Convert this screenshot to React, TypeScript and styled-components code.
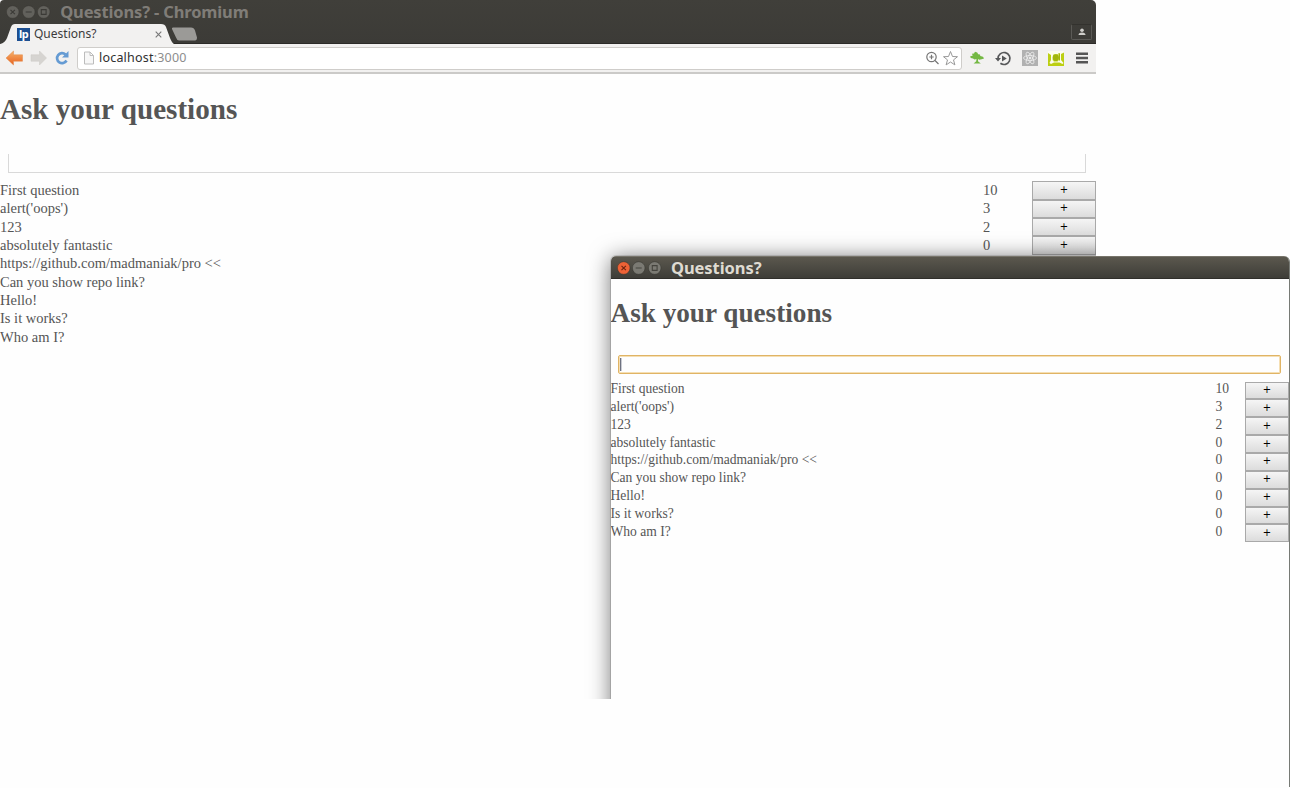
import React from "react";
import styled, { createGlobalStyle, css } from "styled-components";

const GlobalStyle = createGlobalStyle`
  *, *::before, *::after { box-sizing: border-box; }
  html, body { margin: 0; background: #fff; overflow: hidden; }
`;

const uiFont = `"Noto Sans", "Open Sans", sans-serif`;

const Desktop = styled.main`
  position: relative;
  width: 1290px;
  height: 788px;
  overflow: hidden;
  background: #fefefe;
`;

const BrowserWindow = styled.section`
  position: absolute;
  left: 0;
  top: 0;
  width: 1096px;
  height: 699px;
  overflow: hidden;
  display: flex;
  flex-direction: column;
  background: #fefefe;
  border-radius: 4px 5px 0 0;
`;

const AppWindow = styled.section`
  position: absolute;
  left: 610.5px;
  top: 256px;
  width: 679.5px;
  height: 531px;
  display: flex;
  flex-direction: column;
  background: #fefefe;
  border-right: 1px solid #777a75;
  border-radius: 5px 6px 0 0;
  overflow: hidden;
`;

const WindowShadow = styled.div`
  position: absolute;
  left: 611px;
  top: 256px;
  width: 679px;
  height: 560px;
  border-radius: 5px 5px 0 0;
  box-shadow: 0 0 0 1px rgba(0, 0, 0, 0.12), 0 2px 22px rgba(0, 0, 0, 0.55);
`;

const Chrome = styled.header`
  height: 44px;
  flex: none;
  display: flex;
  flex-direction: column;
  background: linear-gradient(#403f3a, #3c3b37);
  border-bottom: 1px solid #2c2b28;
`;

const TitleBar = styled.div<{ $active?: boolean }>`
  flex: none;
  display: flex;
  align-items: center;
  height: 24px;
  padding: 0 0 0 6px;
  ${(p) =>
    p.$active &&
    css`
      height: 23px;
      padding-top: 1px;
      background: linear-gradient(#5b584e, #3e3d38);
      border-top: 1px solid #77746a;
      border-bottom: 1px solid #302f2b;
    `}
`;

const Controls = styled.div<{ $gap: number }>`
  display: flex;
  gap: ${(p) => p.$gap}px;
`;

const Title = styled.h2<{ $active?: boolean }>`
  margin: 0 0 0 9px;
  font: 700 16.5px/20px ${uiFont};
  letter-spacing: ${(p) => (p.$active ? "-0.05px" : "-0.15px")};
  color: ${(p) => (p.$active ? "#dfdbd2" : "#807d78")};
  white-space: nowrap;
`;

const TabStrip = styled.div`
  display: flex;
  height: 20px;
  justify-content: space-between;
`;

const Tabs = styled.div`
  display: flex;
`;

const Tab = styled.div`
  position: relative;
  display: flex;
  align-items: center;
  width: 174px;
  height: 20px;
  padding-left: 17px;
`;

const TabShape = styled.svg`
  position: absolute;
  inset: 0;
`;

const Favicon = styled.span`
  position: relative;
  width: 13px;
  height: 13px;
  background: #1d4f91;
  color: #fff;
  font: 700 11px/12px ${uiFont};
  text-align: center;
  letter-spacing: -0.5px;
`;

const TabTitle = styled.span`
  position: relative;
  flex: 1;
  margin-left: 4px;
  font: 12px/16px ${uiFont};
  color: #3b3b3b;
`;

const TabClose = styled.svg`
  position: relative;
  margin-right: 12px;
`;

const UserBadge = styled.div`
  display: flex;
  align-items: center;
  justify-content: center;
  width: 21px;
  height: 16px;
  margin-right: 4px;
  border: 1px solid #5b5a56;
  border-top-color: #33322e;
  border-radius: 2px;
`;

const Toolbar = styled.nav`
  flex: none;
  display: flex;
  align-items: center;
  height: 30px;
  padding-left: 6px;
  background: #f2f1f0;
  border-bottom: 2px solid #cbcac8;
`;

const NavIcons = styled.div`
  display: flex;
  gap: 6px;
  width: 71px;
`;

const AddressBar = styled.div`
  display: flex;
  align-items: center;
  width: 885px;
  height: 23px;
  padding: 0 3px 0 5px;
  background: #fff;
  border: 1px solid #cfcdca;
  border-radius: 3px;
`;

const Address = styled.span`
  flex: 1;
  margin-left: 4px;
  font: 12.5px/18px ${uiFont};
  letter-spacing: 0.2px;
  color: #2f2f2f;
`;

const Port = styled.span`
  color: #8d8d8d;
`;

const Extensions = styled.div`
  display: flex;
  align-items: center;
  gap: 10px;
  margin-left: 7px;
`;

const Page = styled.div<{ $size: number }>`
  display: flex;
  flex-direction: column;
  font: ${(p) => p.$size}px "Liberation Serif", serif;
  color: #555;
`;

const Heading = styled.h1<{ $top: number }>`
  margin: ${(p) => p.$top}px 0 0;
  font-size: 2.008em;
  line-height: 34px;
  white-space: nowrap;
`;

const BackInput = styled.div`
  height: 19px;
  margin: 28px 10px 8px 8px;
  border: 1px solid #d9d9d9;
  border-width: 0 1px 1px;
`;

const FocusedInput = styled.div`
  display: flex;
  align-items: center;
  height: 19px;
  margin: 25px 8px 6px 7.5px;
  padding-left: 1px;
  border: 1px solid #e0b465;
  border-radius: 2px;
  box-shadow: inset 0 0 0 1px #f5dfb4;
`;

const Caret = styled.i`
  width: 1px;
  height: 13px;
  background: #6e7280;
  box-shadow: 1px 0 #c9cbd2;
  z-index: 1;
`;

const QuestionList = styled.div`
  display: flex;
`;

const Column = styled.div<{ $pitch: number; $width?: number; $drop?: number }>`
  display: grid;
  grid-auto-rows: ${(p) => p.$pitch}px;
  align-content: start;
  line-height: 18px;
  white-space: nowrap;
  ${(p) => (p.$width ? `width: ${p.$width}px;` : "flex: 1;")}
  padding-top: ${(p) => p.$drop ?? 0}px;
`;

const VoteButton = styled.button`
  padding: 0 0 1px;
  border: 1px solid #a9a9a9;
  background: linear-gradient(#f5f5f5, #dcdcdc);
  color: #000;
  font: 10px/14px "DejaVu Sans", sans-serif;
`;

type ControlKind = "close" | "min" | "max";

function WindowControl({ kind, active }: { kind: ControlKind; active?: boolean }) {
  const hot = active && kind === "close";
  const fill = hot ? "#ee6236" : active ? "#7b7a73" : "#62615c";
  const ink = hot ? "#6b2410" : active ? "#45443e" : "#3b3a36";
  return (
    <svg width="14" height="14" viewBox="0 0 14 14" fill="none" stroke={ink} strokeWidth="1.1">
      <circle cx="6.700" cy="7" r="6.300" fill={fill} stroke={active ? "#35342f" : "#383733"} strokeWidth=".5" />
      {kind === "close" && <path d="M4.500 4.800l4.400 4.400M8.900 4.800L4.500 9.200" />}
      {kind === "min" && <path d="M3.700 7h6" />}
      {kind === "max" && <path d="M4.300 4.600h4.800v4.800H4.300z" />}
    </svg>
  );
}

function WindowControls({ active }: { active?: boolean }) {
  return (
    <Controls $gap={active ? 1.7 : 1.6}>
      <WindowControl kind="close" active={active} />
      <WindowControl kind="min" active={active} />
      <WindowControl kind="max" active={active} />
    </Controls>
  );
}

function Arrow({ forward }: { forward?: boolean }) {
  return (
    <svg width="18" height="18" viewBox="0 0 18 18">
      <defs>
        <linearGradient id="back" x2="0" y2="1">
          <stop stopColor="#f6b36b" />
          <stop offset="1" stopColor="#e8601e" />
        </linearGradient>
      </defs>
      <path
        d={forward ? "M16.500 9L9.500 2V5.800H1v6.400h8.500V16z" : "M0 9L7.500 2V5.800h9v6.400h-9V16z"}
        fill={forward ? "#d6d4d1" : "url(#back)"}
        stroke={forward ? "#cac8c5" : "#e28a4b"}
        strokeWidth=".5"
      />
    </svg>
  );
}

function ToolbarIcons() {
  return (
    <Extensions>
      <svg width="16" height="16" viewBox="0 0 16 16" fill="#74b843">
        <path d="M1.200 6.300l2.500-.5-.7-2 2-.3 1-1.700 2.200.8 1 1.700 1.800.2.300 1.600 2.700.7 1 1.700-2.300.8-2.500.4-1.200-.7v2.200l2.800 2.300H4.600l2.600-2.300.3-2.200-2 .6-1.500-1.200-2.300-.5z" />
      </svg>
      <svg width="17" height="17" viewBox="0 0 17 17" fill="none" stroke="#57585a" strokeWidth="1.700">
        <path d="M3 8.500a6 6 0 1 1 2.400 4.800" />
        <path d="M0 8h6l-3 3.500zM7 5.500l4.800 3L7 11.500z" fill="#57585a" stroke="none" />
      </svg>
      <svg width="16" height="16" viewBox="0 0 16 16" fill="none" stroke="#ededed" strokeWidth=".8">
        <path d="M0 0h16v16H0z" fill="#b1b1b1" stroke="none" />
        <ellipse cx="8" cy="8" rx="6.500" ry="2.500" />
        <ellipse cx="8" cy="8" rx="6.500" ry="2.500" transform="rotate(60 8 8)" />
        <ellipse cx="8" cy="8" rx="6.500" ry="2.500" transform="rotate(120 8 8)" />
        <circle cx="8" cy="8" r="1" fill="#ededed" />
      </svg>
      <svg width="16" height="16" viewBox="0 0 16 16">
        <path d="M0 1.500h16V16H0z" fill="#bccf12" />
        <path d="M0 1h16v1.500l-3 1.500v6l2.500 3-1 1-3-1.500H6L3 14l-1.500-1L3 10V5L0 3z" fill="#fbfced" />
        <path d="M5 4.800l2-.8h4v6l-1.500 1.700H6L4.500 10z" fill="#d3df57" />
        <ellipse cx="7.800" cy="7.700" rx="3.100" ry="3.400" fill="#a1b60a" />
        <path d="M10.500 3.500h1v7" stroke="#a1b60a" fill="none" />
      </svg>
      <svg width="16" height="16" viewBox="0 0 16 16" fill="#555">
        <path d="M2 2.500h12v2.500H2zM2 6.800h12v2.500H2zM2 11.100h12v2.500H2z" />
      </svg>
    </Extensions>
  );
}

const questions = [
  { text: "First question", votes: 10 },
  { text: "alert('oops')", votes: 3 },
  { text: "123", votes: 2 },
  { text: "absolutely fantastic", votes: 0 },
  { text: "https://github.com/madmaniak/pro <<", votes: 0 },
  { text: "Can you show repo link?", votes: 0 },
  { text: "Hello!", votes: 0 },
  { text: "Is it works?", votes: 0 },
  { text: "Who am I?", votes: 0 },
];

interface QuestionsProps {
  pitch: number;
  voteWidth: number;
  buttonWidth: number;
  buttonDrop: number;
  visibleVotes?: number;
}

function Questions({ pitch, voteWidth, buttonWidth, buttonDrop, visibleVotes = 9 }: QuestionsProps) {
  const voted = questions.slice(0, visibleVotes);
  return (
    <QuestionList>
      <Column $pitch={pitch}>
        {questions.map((q) => <span key={q.text}>{q.text}</span>)}
      </Column>
      <Column $pitch={pitch} $width={voteWidth}>
        {voted.map((q) => <span key={q.text}>{q.votes}</span>)}
      </Column>
      <Column $pitch={pitch} $width={buttonWidth} $drop={buttonDrop}>
        {voted.map((q) => <VoteButton key={q.text}>+</VoteButton>)}
      </Column>
    </QuestionList>
  );
}

export default function App() {
  return (
    <Desktop>
      <GlobalStyle />
      <BrowserWindow>
        <Chrome>
          <TitleBar>
            <WindowControls />
            <Title>Questions? - Chromium</Title>
          </TitleBar>
          <TabStrip>
            <Tabs>
              <Tab>
                <TabShape width="174" height="20" viewBox="0 0 174 20">
                  <path d="M0 20q5-1 7-6l4-11q1-3 4-3h146q4 0 5 3l4 11q2 5 4 6z" fill="#f2f1f0" />
                </TabShape>
                <Favicon>lp</Favicon>
                <TabTitle>Questions?</TabTitle>
                <TabClose width="7" height="7" viewBox="0 0 7 7" stroke="#777" strokeWidth="1.100">
                  <path d="M.7.7l5.600 5.600M6.300.7L.7 6.300" />
                </TabClose>
              </Tab>
              <svg width="26" height="20" viewBox="0 0 26 20" overflow="visible">
                <path d="M-1 3.500h18q3 0 4 3l2 7q0 3-2 3H5q-2 0-3-3L-2 5q-.5-1.500 1-1.500z" fill="#9b9a97" />
              </svg>
            </Tabs>
            <UserBadge>
              <svg width="8" height="8" viewBox="0 0 8 8" fill="#cfcecb">
                <circle cx="4" cy="2.200" r="1.800" />
                <path d="M.5 7q0-2.500 3.500-2.500T7.500 7z" />
              </svg>
            </UserBadge>
          </TabStrip>
        </Chrome>
        <Toolbar>
          <NavIcons>
            <Arrow />
            <Arrow forward />
            <svg width="16" height="18" viewBox="0 0 16 18" fill="none" stroke="#659bd3" strokeWidth="2.700">
              <path d="M12.500 11.500a5 5 0 1 1-1-6" />
              <path d="M14.500 2v6.500H8z" fill="#659bd3" stroke="none" />
            </svg>
          </NavIcons>
          <AddressBar>
            <svg width="12" height="14" viewBox="0 0 12 14" fill="#f7f7f7" stroke="#bcbcbc">
              <path d="M1.500 1h5.500l3.500 3.500v8.500h-9zM7 1v3.500h3.500" />
            </svg>
            <Address>localhost<Port>:3000</Port></Address>
            <svg width="14" height="14" viewBox="0 0 14 14" fill="none" stroke="#777" strokeWidth="1.200">
              <circle cx="5.500" cy="6" r="4.700" />
              <path d="M9 9.500l3.500 3.500M3.300 6h4.400M5.500 3.800v4.400" />
            </svg>
            <svg width="18" height="17" viewBox="0 0 18 17" fill="#fff" stroke="#999">
              <path d="M10.500 1.500l2 5 5 .2-4 3.200 1.400 5-4.400-2.900-4.400 2.900 1.400-5-4-3.200 5-.2z" />
            </svg>
          </AddressBar>
          <ToolbarIcons />
        </Toolbar>
        <Page $size={14.5}>
          <Heading $top={18}>Ask your questions</Heading>
          <BackInput />
          <Questions pitch={18.35} voteWidth={49} buttonWidth={64} buttonDrop={0.4} visibleVotes={4} />
        </Page>
        <WindowShadow />
      </BrowserWindow>
      <AppWindow>
        <TitleBar $active>
          <WindowControls active />
          <Title $active>Questions?</Title>
        </TitleBar>
        <Page $size={13.55}>
          <Heading $top={17}>Ask your questions</Heading>
          <FocusedInput><Caret /></FocusedInput>
          <Questions pitch={17.85} voteWidth={29.5} buttonWidth={44} buttonDrop={1.6} />
        </Page>
      </AppWindow>
    </Desktop>
  );
}
